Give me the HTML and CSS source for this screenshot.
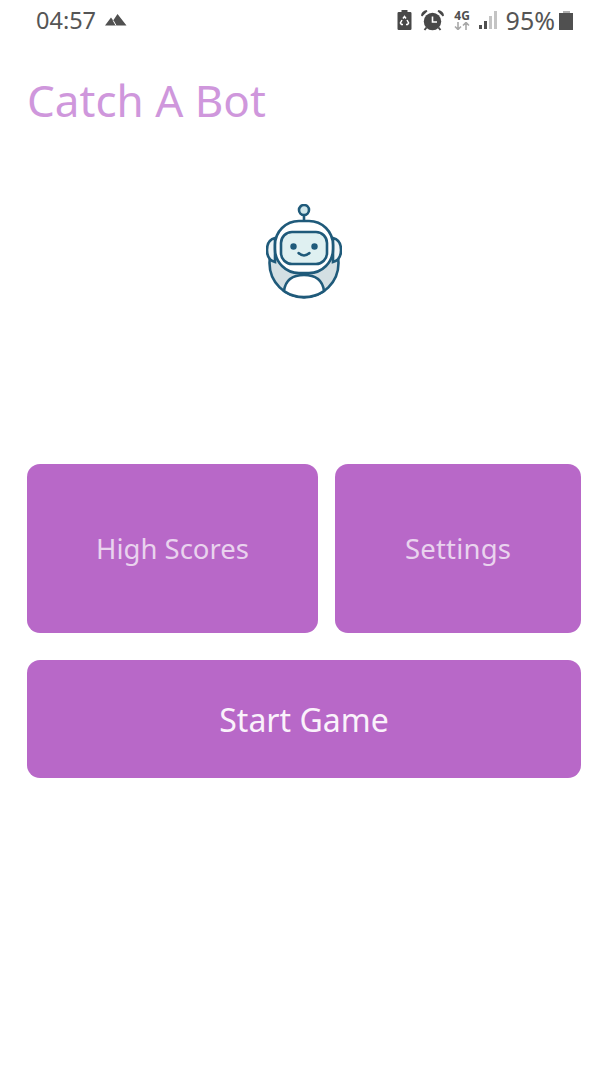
FILE: index.html
```html
<!doctype html>
<html>
<head>
<meta charset="utf-8">
<title>Catch A Bot</title>
<link rel="stylesheet" href="styles.css">
</head>

<body>
<div class="status">
	<div class="status-left">
		<span class="clock">04:57</span>
		<svg class="ic-peak" width="22" height="12" viewBox="0 0 22 12"><path fill="#505050" d="M0 11.500 6 3.500 8.200 6.500 12.500 0 21.500 11.500z"/><path fill="none" stroke="#fff" stroke-width="1" d="M8.200 6.500 11 11.500"/></svg>
	</div>
	<div class="status-right">
		<svg class="ic-saver" width="15" height="20" viewBox="0 0 15 20"><path fill="#484848" d="M4.500 0h6v2h2.700q1.300 0 1.300 1.300v15.400q0 1.300-1.300 1.300H1.800Q.5 20 .5 18.700V3.300Q.5 2 1.800 2h2.700z"/><path fill="none" stroke="#fff" stroke-width="1.500" d="M6 8.500 7.500 6.500 9 8.500M10 10l1.600 3-1 1.500H9M6 14.500H4.400l-1-1.500L5 10"/></svg>
		<svg class="ic-alarm" width="23" height="21" viewBox="0 0 23 21"><circle cx="11.500" cy="11.500" r="8.700" fill="#484848"/><path fill="none" stroke="#fff" stroke-width="1.600" d="M11.500 6.500v5.500h4.500"/><path fill="#484848" d="M0 5.500Q.5 1 5.500 0L6.500 1.200 1.200 6.500zM23 5.500Q22.500 1 17.500 0L16.500 1.200 21.800 6.500z"/><path fill="none" stroke="#484848" stroke-width="2" d="M5.500 17.500 3.500 20M17.500 17.500l2 2.500"/></svg>
		<div class="net">
			<span class="net-label">4G</span>
			<svg width="16" height="8" viewBox="0 0 16 8"><path fill="none" stroke="#a8a8a8" stroke-width="1.600" d="M4 0v7M1 4.500l3 3 3-3M12 8V1M9 3.500l3-3 3 3"/></svg>
		</div>
		<div class="signal">
			<i class="bar bar-1"></i>
			<i class="bar bar-2"></i>
			<i class="bar bar-3 off"></i>
			<i class="bar bar-4 off"></i>
		</div>
		<span class="percent">95%</span>
		<div class="battery"><i class="battery-cap"></i><i class="battery-body"></i></div>
	</div>
</div>

<h1 class="title">Catch A Bot</h1>

<div class="logo">
	<svg width="76" height="96" viewBox="0 0 76 96">
		<g stroke="#1f5a7a" stroke-width="2.600">
			<path fill="#fff" d="M38 11v8"/>
			<circle cx="38" cy="6" r="5" fill="#cfe6ea"/>
			<circle cx="38" cy="59" r="34.500" fill="#d3dfe3"/>
			<path fill="#fff" d="M18 87q2-16 20-16t20 16q-9 6-20 6t-20-6z"/>
			<path fill="#eef4f6" d="M9 34q-8 2-8 12t8 12zM67 34q8 2 8 12t-8 12z"/>
			<rect x="9" y="17" width="58" height="52" rx="24" fill="#fff"/>
			<rect x="15" y="28" width="46" height="32" rx="11" fill="#dff0f1"/>
		</g>
		<circle cx="27.500" cy="42.500" r="3.200" fill="#1f5a7a"/>
		<circle cx="48.500" cy="42.500" r="3.200" fill="#1f5a7a"/>
		<path fill="none" stroke="#1f5a7a" stroke-width="2.400" stroke-linecap="round" d="M32.500 49q5.500 5 11 0"/>
	</svg>
</div>

<div class="menu">
	<div class="menu-row">
		<div class="btn btn-scores">High Scores</div>
		<div class="btn btn-settings">Settings</div>
	</div>
	<div class="btn btn-start">Start Game</div>
</div>
</body>
</html>
```

FILE: styles.css
```css
body {
	margin: 0;
	background: #FFF;
	font-family: "Noto Sans", "Open Sans", sans-serif;
}
.status {
	height: 42px;
	display: flex;
	justify-content: space-between;
	align-items: center;
	padding: 0 35px 0 36px;
	color: #555;
}
.status-left,
.status-right {
	display: flex;
	align-items: center;
}
.status-right {
	padding-bottom: 2px;
}
.clock {
	font-size: 23.500px;
	line-height: 42px;
	margin-top: -2px;
}
.ic-peak {
	margin: -2px 0 0 9px;
}
.ic-alarm {
	margin-left: 9px;
}
.net {
	width: 16px;
	margin-left: 10px;
	display: flex;
	flex-direction: column;
	align-items: center;
	line-height: 12px;
}
.net-label {
	font-size: 12px;
	font-weight: bold;
	color: #505050;
}
.net svg {
	display: block;
}
.signal {
	height: 18px;
	margin-left: 9px;
	display: flex;
	align-items: flex-end;
	gap: 2.500px;
}
.bar {
	width: 2.500px;
	background: #505050;
}
.bar.off {
	background: #C4C4C4;
}
.bar-1 {
	height: 4px;
}
.bar-2 {
	height: 8px;
}
.bar-3 {
	height: 13px;
}
.bar-4 {
	height: 18px;
}
.percent {
	font-size: 25px;
	line-height: 38px;
	margin-left: 9px;
}
.battery {
	margin-left: 4px;
	display: flex;
	flex-direction: column;
	align-items: center;
}
.battery-cap {
	width: 7px;
	height: 2px;
	background: #B0B0B0;
}
.battery-body {
	width: 14px;
	height: 17px;
	background: #505050;
}
.title {
	margin: 28px 0 0 27px;
	font-size: 44px;
	line-height: 60px;
	font-weight: normal;
	color: #CF97DC;
}
.logo {
	margin-top: 74px;
	display: flex;
	justify-content: center;
}
.logo svg {
	display: block;
}
.menu {
	margin: 164px 27px 0;
	display: flex;
	flex-direction: column;
	gap: 27px;
}
.menu-row {
	display: flex;
	gap: 17px;
}
.btn {
	display: flex;
	align-items: center;
	justify-content: center;
	background: #B868C8;
	border-radius: 13px;
	color: #E9D3EE;
	font-size: 27.500px;
}
.btn-scores {
	width: 291px;
	height: 169px;
}
.btn-settings {
	flex: 1;
	height: 169px;
	letter-spacing: .2px;
}
.btn-start {
	height: 118px;
	color: #FAF2FB;
	font-size: 32px;
}
```
